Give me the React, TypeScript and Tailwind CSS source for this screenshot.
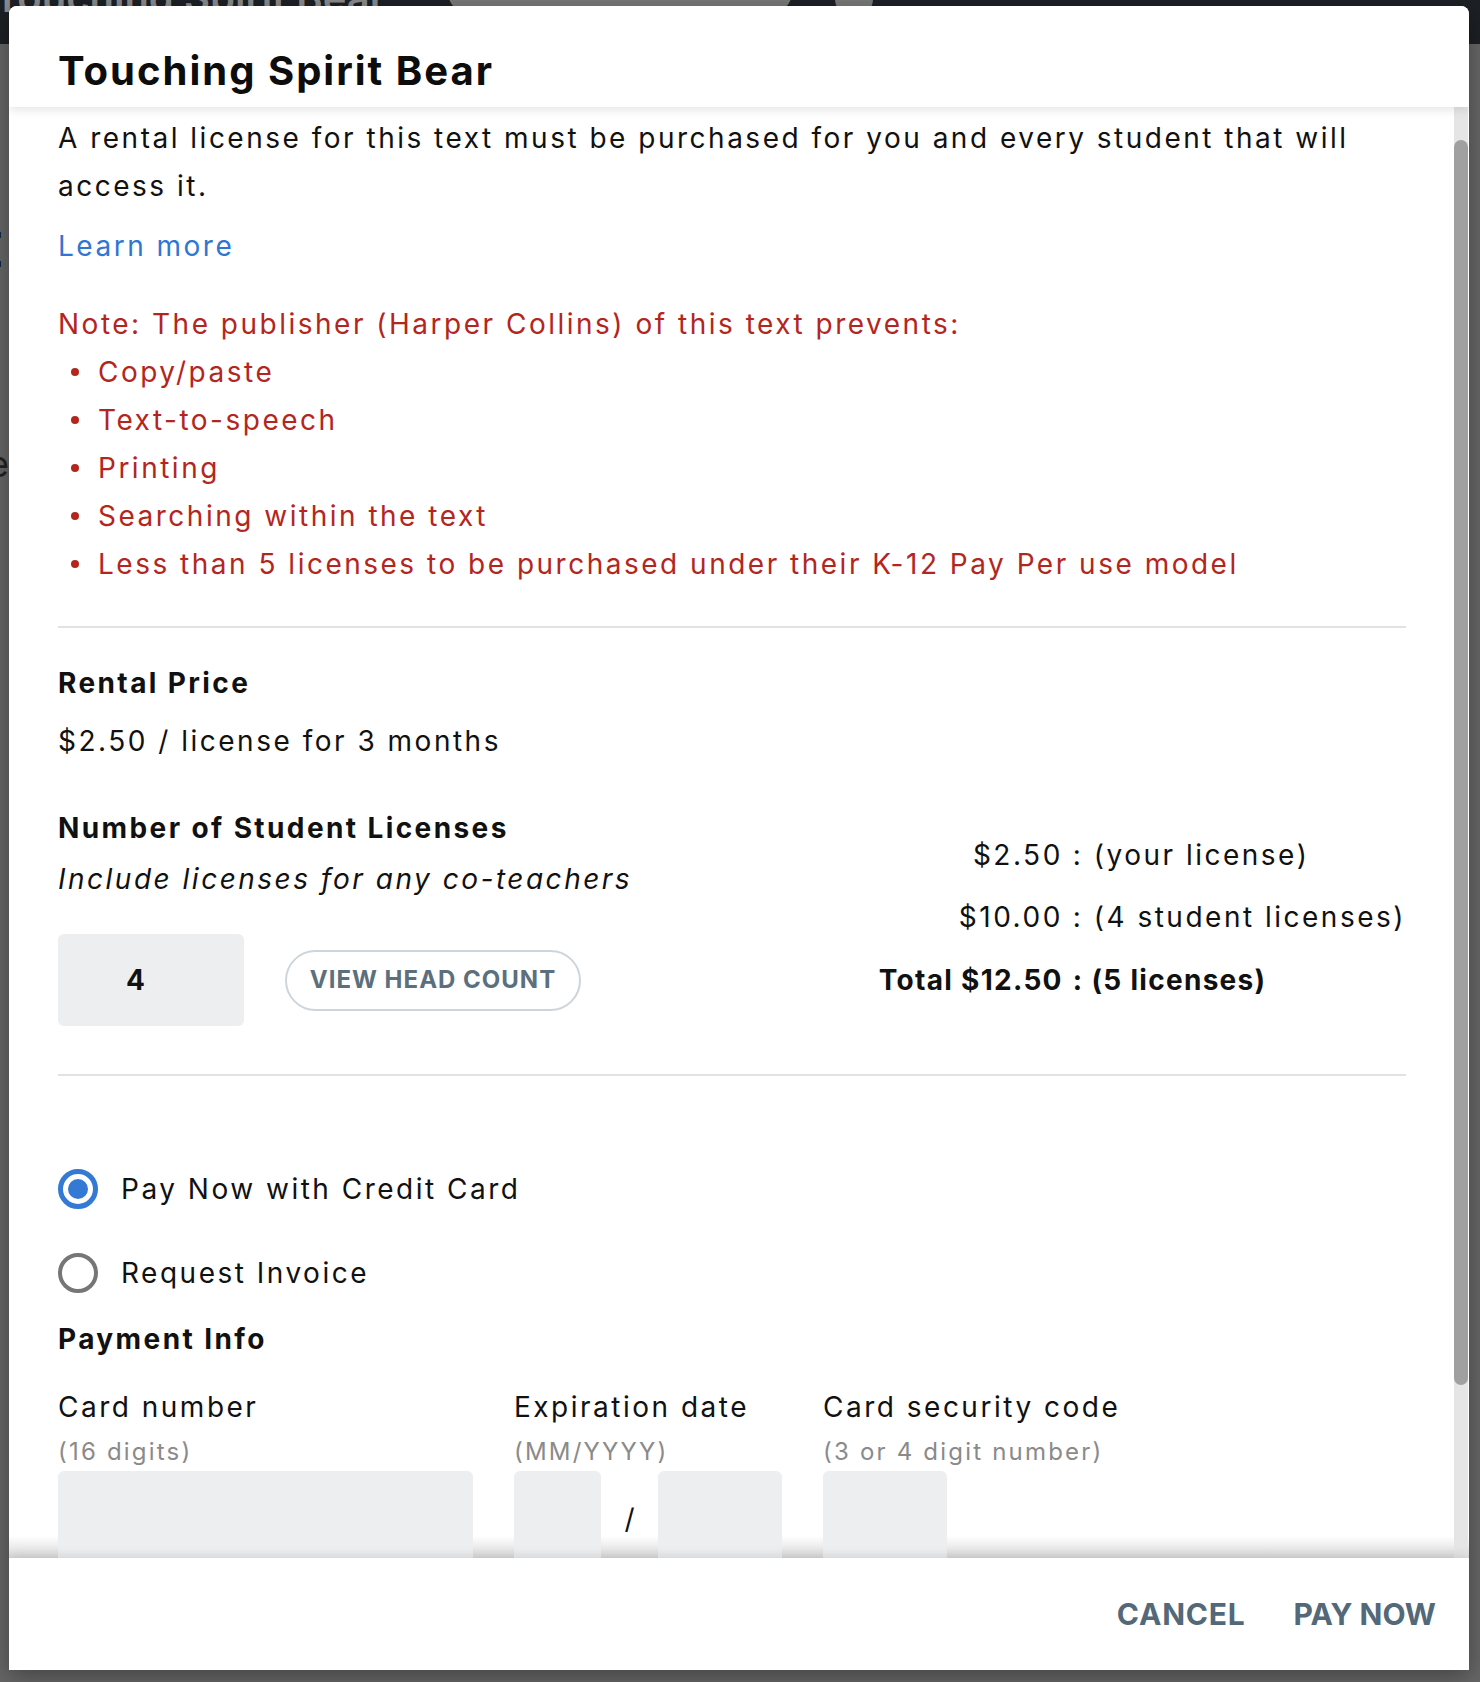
import React from "react";

function Bullet({ children }: { children: React.ReactNode }) {
  return (
    <li className="flex items-center pl-[13px]">
      <span className="w-[8px] h-[8px] rounded-full bg-[#b3261e] shrink-0" />
      <span className="ml-[19px]">{children}</span>
    </li>
  );
}

export default function App() {
  return (
    <div className="relative w-[1480px] h-[1682px] overflow-hidden bg-[#666666] font-['Inter',sans-serif]">
      {/* page behind the dialog */}
      <div className="relative h-[44px] bg-[#1d2024] overflow-hidden">
        <div className="absolute left-[-6px] top-[-32px] text-[40px] font-semibold text-[#8c8c8c] whitespace-nowrap">
          Touching Spirit Bear
        </div>
        <div className="absolute left-[448px] top-[-30px] w-[344px] h-[44px] rounded-full bg-[#7a7a7a] flex items-end justify-center pb-[4px] text-[26px] font-bold text-[#2a2a2a]">
          BUY RENTAL LICENSES
        </div>
        <div className="absolute left-[835px] top-[-20px] w-[38px] h-[38px] rounded-full bg-[#7a7a7a]" />
      </div>
      <div className="absolute left-[-26px] top-[226px] text-[48px] font-bold text-black leading-none">E</div>
      <div className="absolute left-[-12px] top-[446px] text-[36px] text-[#222] leading-none">e</div>

      {/* dialog */}
      <div className="absolute left-[9px] top-[6px] w-[1460px] h-[1664px] bg-white rounded-t-[8px] overflow-hidden flex flex-col shadow-[0_6px_24px_rgba(0,0,0,0.35)]">
        <div className="relative z-10 h-[101px] shrink-0 bg-white pl-[49px] shadow-[0_2px_10px_rgba(0,0,0,0.12)]">
          <h1 className="pt-[41px] text-[40px] leading-[48px] font-bold tracking-[2px] text-[#0d0d0d]">Touching Spirit Bear</h1>
        </div>

        <div className="relative flex-1 min-h-0 flex">
          <div className="absolute inset-x-0 bottom-0 h-[22px] bg-gradient-to-b from-white to-[#d9d9d9]" />
          <div className="relative flex-1 overflow-hidden pl-[49px] pr-[48px] pt-[7px] text-[28px] leading-[48px] tracking-[2.5px] text-[#111]">
            <p>
              A rental license for this text must be purchased for you and every student that will access it.
            </p>
            <a className="block mt-[12px] text-[#2f76d2]">Learn more</a>

            <div className="mt-[30px] text-[#b3261e]">
              <p>Note: The publisher (Harper Collins) of this text prevents:</p>
              <ul>
                <Bullet>Copy/paste</Bullet>
                <Bullet>Text-to-speech</Bullet>
                <Bullet>Printing</Bullet>
                <Bullet>Searching within the text</Bullet>
                <Bullet>Less than 5 licenses to be purchased under their K-12 Pay Per use model</Bullet>
              </ul>
            </div>

            <div className="mt-[38px] h-[2px] bg-[#e2e2e2]" />

            <h2 className="mt-[31px] font-bold tracking-[2.4px]">Rental Price</h2>
            <p className="mt-[10px]">$2.50 / license for 3 months</p>

            <div className="mt-[39px] flex justify-between">
              <div>
                <h2 className="font-bold tracking-[2.4px]">Number of Student Licenses</h2>
                <p className="mt-[3px] italic">Include licenses for any co-teachers</p>
                <div className="mt-[31px] flex items-center gap-[41px]">
                  <div className="w-[186px] h-[92px] rounded-[6px] bg-[#edeef0] flex items-center pl-[68px] font-bold tracking-normal">
                    4
                  </div>
                  <button className="w-[296px] h-[61px] rounded-full border-2 border-[#cdd5db] text-[24px] font-bold text-[#5b6f7d] tracking-[1px]">
                    VIEW HEAD COUNT
                  </button>
                </div>
              </div>
              <div className="mt-[27px] grid grid-cols-[auto_auto] gap-x-[10px] self-start">
                <div className="text-right">$2.50</div>
                <div>: (your license)</div>
                <div className="text-right mt-[14px]">$10.00</div>
                <div className="mt-[14px]">: (4 student licenses)</div>
                <div className="text-right mt-[15px] font-bold tracking-[1.3px]">Total $12.50</div>
                <div className="mt-[15px] font-bold tracking-[1.3px]">: (5 licenses)</div>
              </div>
            </div>

            <div className="mt-[48px] h-[2px] bg-[#e2e2e2]" />

            <label className="mt-[89px] flex items-center gap-[23px]">
              <span className="w-[40px] h-[40px] rounded-full border-[5px] border-[#3479d3] flex items-center justify-center">
                <span className="w-[20px] h-[20px] rounded-full bg-[#3479d3]" />
              </span>
              <span>Pay Now with Credit Card</span>
            </label>
            <label className="mt-[36px] flex items-center gap-[23px]">
              <span className="w-[40px] h-[40px] rounded-full border-[4px] border-[#767676]" />
              <span>Request Invoice</span>
            </label>

            <h2 className="mt-[18px] font-bold tracking-[2.4px]">Payment Info</h2>

            <div className="mt-[20px] flex gap-[41px]">
              <div className="w-[415px]">
                <div>Card number</div>
                <div className="mt-[3px] text-[24px] leading-[36px] tracking-[2.2px] text-[#8a8a8a]">(16 digits)</div>
                <div className="mt-[1px] h-[92px] rounded-[6px] bg-[#edeef0]" />
              </div>
              <div className="w-[268px]">
                <div>Expiration date</div>
                <div className="mt-[3px] text-[24px] leading-[36px] tracking-[2.2px] text-[#8a8a8a]">(MM/YYYY)</div>
                <div className="mt-[1px] flex">
                  <div className="w-[87px] h-[92px] rounded-[6px] bg-[#edeef0]" />
                  <div className="w-[57px] flex justify-center pt-[24px] tracking-normal">/</div>
                  <div className="w-[124px] h-[92px] rounded-[6px] bg-[#edeef0]" />
                </div>
              </div>
              <div className="w-[320px]">
                <div>Card security code</div>
                <div className="mt-[3px] text-[24px] leading-[36px] tracking-[2.2px] text-[#8a8a8a]">(3 or 4 digit number)</div>
                <div className="mt-[1px] w-[124px] h-[92px] rounded-[6px] bg-[#edeef0]" />
              </div>
            </div>
          </div>
          <div className="relative w-[14px] shrink-0 bg-[#e5e5e5] mr-[1px]">
            <div className="absolute inset-x-0 top-[33px] h-[1245px] rounded-full bg-[#a0a0a0]" />
          </div>
        </div>

        <div className="relative z-10 h-[112px] shrink-0 bg-white flex items-center justify-end gap-[48px] pr-[33px] shadow-[0_-2px_10px_rgba(0,0,0,0.12)]">
          <button className="text-[30px] font-bold tracking-[0.8px] text-[#536878]">CANCEL</button>
          <button className="text-[30px] font-bold text-[#536878]">PAY NOW</button>
        </div>
      </div>
    </div>
  );
}
